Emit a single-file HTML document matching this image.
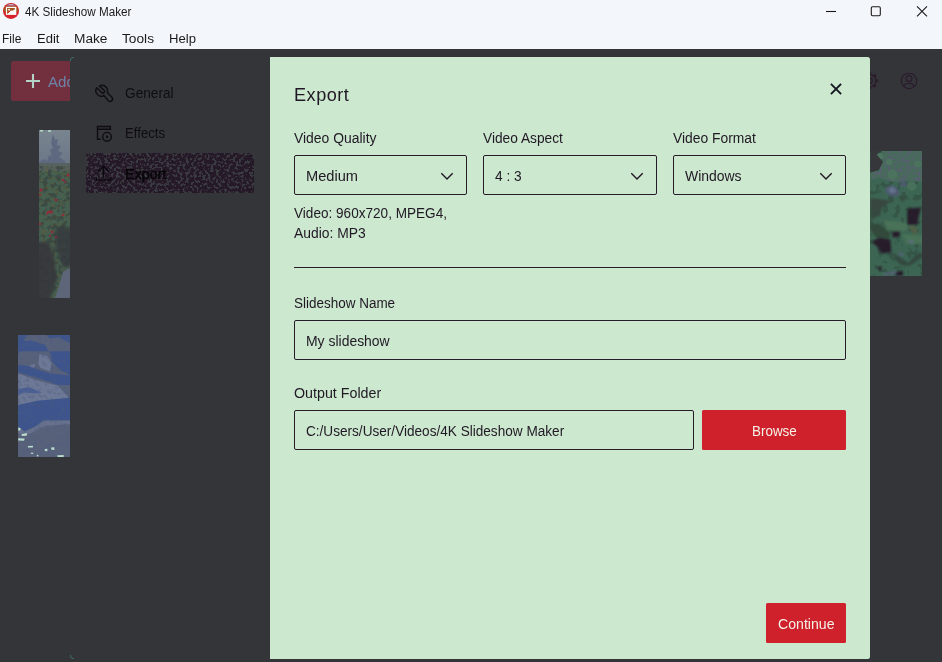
<!DOCTYPE html>
<html>
<head>
<meta charset="utf-8">
<title>4K Slideshow Maker</title>
<style>
html,body{margin:0;padding:0;}
body{width:942px;height:662px;overflow:hidden;position:relative;background:#343539;font-family:"Liberation Sans",sans-serif;color:#1b1b22;}
.abs{position:absolute;white-space:nowrap;}
#topbar{left:0;top:0;width:942px;height:49px;background:#f3f6fa;}
.t{position:absolute;white-space:nowrap;line-height:1;transform-origin:0 0;}
#title{left:25px;top:5px;font-size:13px;color:#1a1a1a;}
.menu{font-size:13px;color:#1a1a1a;top:32px;}
#addbtn{left:11px;top:61px;width:70px;height:40px;background:#72303f;border-radius:2px 0 0 2px;}
#side{left:70px;top:57px;width:200px;height:602px;background:#343539;border-radius:3px 0 0 3px;}
.nav{font-size:14px;color:#1c1b20;}
#dlg{left:270px;top:57px;width:600px;height:602px;background:#cce8cf;border-radius:0 2.500px 2.500px 0;}
.lbl{font-size:14px;color:#1b1b22;}
.box{position:absolute;box-sizing:border-box;border:1px solid #271b29;border-radius:2px;height:40px;}
.btn{position:absolute;background:#cf212b;border-radius:1.500px;height:40px;color:#f6efe6;font-size:14px;text-align:center;line-height:40px;}
</style>
</head>
<body>
<div id="topbar" class="abs"></div>
<!-- app icon -->
<svg class="abs" style="left:0;top:0" width="24" height="22" viewBox="0 0 24 22">
  <circle cx="11" cy="10.900" r="8" fill="#d6212b"/>
  <path d="M3.600 11.400a7.400 7.400 0 0 1 14.800 0z" fill="#a3561f"/>
  <rect x="7.400" y="4.100" width="7.200" height="1.700" fill="#b5629c"/>
  <rect x="9" y="4.200" width="4" height="0.600" fill="#dcdcc4"/>
  <rect x="5.900" y="6.800" width="10.400" height="8.100" fill="#fbfbfb"/>
  <path d="M7.100 8.100h7.700v1.500l-1.800 1-2.500 0.200-2.900 3-0.500-0.300z" fill="#a3561f"/>
  <rect x="8.200" y="8.900" width="1.700" height="1.600" fill="#fbfbfb"/>
  <path d="M7.500 13.200l2.600-2.300" stroke="#e02626" stroke-width="0.900"/>
</svg>
<!-- window controls -->
<svg class="abs" style="left:820px;top:0" width="122" height="24" viewBox="0 0 122 24">
  <path d="M6 11.5h10" stroke="#1a1a1a" stroke-width="1.1" fill="none"/>
  <rect x="51.3" y="6.8" width="9" height="9" rx="1.2" stroke="#1a1a1a" stroke-width="1.1" fill="none"/>
  <path d="M97 6.3l10 10M107 6.3l-10 10" stroke="#1a1a1a" stroke-width="1.1" fill="none"/>
</svg>

<!-- background app -->
<div id="addbtn" class="abs"></div>
<svg class="abs" style="left:24px;top:72px" width="18" height="18" viewBox="0 0 18 18"><path d="M9 2v14M2 9h14" stroke="#b6d3c8" stroke-width="2.100" fill="none"/></svg>
<div class="t" id="addtxt" style="left:47.500px;top:75px;font-size:14px;color:#6c84aa;transform:scaleX(1.080);">Add</div>

<svg id="thumb1" class="abs" style="left:39px;top:130px" width="31" height="168" viewBox="0 0 31 168">
  <defs>
    <linearGradient id="g1" x1="0" y1="0" x2="0" y2="1"><stop offset="0" stop-color="#78858f"/><stop offset="1" stop-color="#6a7486"/></linearGradient>
    <filter id="f1" x="0" y="0" width="100%" height="100%" color-interpolation-filters="sRGB">
      <feTurbulence type="fractalNoise" baseFrequency="0.22" numOctaves="2" seed="3"/>
      <feColorMatrix type="matrix" values="0 0 0 0 0.20  0 0 0 0 0.23  0 0 0 0 0.23  0 7 0 0 -3.400"/>
    </filter>
    <filter id="bl1" x="-20%" y="-20%" width="140%" height="140%"><feGaussianBlur stdDeviation="1.600"/></filter>
    <filter id="f1b" x="0" y="0" width="100%" height="100%" color-interpolation-filters="sRGB">
      <feTurbulence type="fractalNoise" baseFrequency="0.3" numOctaves="2" seed="11"/>
      <feColorMatrix type="matrix" values="0 0 0 0 0.36  0 0 0 0 0.35  0 0 0 0 0.22  7 0 0 0 -3.700"/>
    </filter>
  </defs>
  <rect width="31" height="40" fill="url(#g1)"/>
  <path d="M14 4l2 6 3-1-1 6 4 1-3 5 5 2-4 4 6 4v9H0v-8l5-3 3 2 2-6 3 1-2-6 3-2-2-5z" fill="#5e6981"/>
  <rect y="34" width="31" height="134" fill="#455f50"/><rect y="33" width="31" height="8" fill="#55625f"/>
  <rect y="36" width="31" height="132" filter="url(#f1b)" opacity="0.600"/>
  <rect y="36" width="31" height="132" filter="url(#f1)" opacity="0.550"/>
  <path d="M-3 112h13l5 14 3 24-8 22H-3z" fill="#34363a" opacity="0.850" filter="url(#bl1)"/>
  <path d="M16 100l9-4 9 4v36l-10 2-8-22z" fill="#36383c" opacity="0.800" filter="url(#bl1)"/>
  <path d="M31 138v30H16l4-12 4-14z" fill="#5d6579"/>
  <g fill="#8e2e3c"><circle cx="29" cy="45" r="1.500"/><circle cx="24" cy="50" r="1.300"/><circle cx="26" cy="52" r="1"/><circle cx="2" cy="60" r="1.700"/><circle cx="1" cy="65" r="1.100"/><circle cx="17" cy="70" r="1.300"/><ellipse cx="11" cy="82" rx="3.200" ry="1.500"/><circle cx="8" cy="84" r="1"/><circle cx="24" cy="85" r="1.300"/><circle cx="1" cy="94" r="1.200"/><circle cx="13" cy="102" r="1.500"/><circle cx="11" cy="106" r="1"/><circle cx="17" cy="107" r="1"/></g>
  <rect x="1" y="0" width="3" height="1.500" fill="#b9d7c4"/><rect x="9" y="0" width="3" height="2" fill="#a9c6bd"/>
</svg>
<svg id="thumb2" class="abs" style="left:18px;top:335px" width="52" height="122" viewBox="0 0 52 122">
  <defs>
    <filter id="f2" x="0" y="0" width="100%" height="100%" color-interpolation-filters="sRGB">
      <feTurbulence type="fractalNoise" baseFrequency="0.25" numOctaves="2" seed="5"/>
      <feColorMatrix type="matrix" values="0 0 0 0 0.30  0 0 0 0 0.36  0 0 0 0 0.50  6 0 0 0 -3.100"/>
    </filter>
    <clipPath id="c2"><rect width="52" height="122"/></clipPath>
  </defs>
  <g clip-path="url(#c2)">
  <rect width="52" height="122" fill="#57617a"/>
  <polygon points="0.2,-0.8 10.3,-0.8 2.3,9.8 0.2,12.5" fill="#3d548c"/>
  <polygon points="0.2,6.6 12.9,5.6 26.7,9.8 30.9,16.2 22.5,16.2 2.3,16.2 0.2,19.3" fill="#3d548c"/>
  <polygon points="27.7,-0.8 53.1,-0.8 53.1,8.8 41.5,2.4 32.0,3.5" fill="#3d548c"/>
  <polygon points="32.0,16.2 53.1,16.2 53.1,40.5 42.6,35.2 34.1,26.7" fill="#3d548c"/>
  <polygon points="21.4,19.3 28.8,20.4 33.6,27.8 32.0,36.3 22.5,33.1 20.3,28.9" fill="#6d7896"/>
  <polygon points="11.9,29.9 17.2,28.9 16.1,33.1 12.9,33.6" fill="#6d7896"/>
  <polygon points="0.2,29.9 9.8,31.0 32.0,38.4 53.1,40.5 53.1,50.0 40.4,50.0 22.5,43.7 0.2,37.3" fill="#3d548c"/>
  <polygon points="0.2,38.4 17.2,44.7 40.4,51.1 48.9,60.6 53.1,67.0 53.1,71.2 0.2,71.2" fill="#6d7896"/>
  <polygon points="0.2,54.3 10.8,52.1 23.5,57.4 17.2,58.5 5.5,57.4 0.2,60.6" fill="#4c5f92"/>
  <polygon points="0.2,70.1 19.3,65.8 53.1,62.6 53.1,85.4 25.6,85.4 17.2,91.7 6.6,96.5 0.2,91.7" fill="#3d548c"/>
  <polygon points="0.2,91.7 6.6,96.5 17.2,91.7 25.6,85.4 53.1,85.4 53.1,89.1 27.7,90.7 17.2,96.0 7.6,100.7 0.2,98.1" fill="#67718d"/>
  <rect width="52" height="122" filter="url(#f2)" opacity="0.350"/>
  <g fill="#b9dccd">
    <polygon points="0.2,92.8 2.6,93.0 2.3,95.4 0.2,95.4"/>
    <polygon points="3.4,99.2 8.9,98.1 8.7,100.7 3.9,101.1"/>
    <polygon points="0.2,103.2 6.6,103.4 6.1,105.7 0.2,105.5"/>
    <polygon points="9.8,111.0 15.0,110.8 14.8,112.5 10.0,112.6"/>
    <polygon points="26.7,114.0 29.3,113.8 29.4,116.3 26.9,116.1"/>
    <polygon points="33.0,112.4 36.2,112.2 36.4,115.0 33.6,114.8"/>
    <polygon points="12.9,117.7 15.3,117.7 15.3,118.9 12.9,118.9"/>
    <polygon points="39.4,120.3 45.7,120.1 45.7,122.0 39.6,122.0"/>
    <polygon points="18.8,119.8 20.4,119.8 20.4,121.4 18.8,121.4"/>
  </g>
  </g>
</svg>
<svg id="thumb3" class="abs" style="left:870px;top:151px" width="52" height="125" viewBox="0 0 52 125">
  <defs>
    <filter id="f3" x="0" y="0" width="100%" height="100%" color-interpolation-filters="sRGB">
      <feTurbulence type="fractalNoise" baseFrequency="0.16" numOctaves="2" seed="9"/>
      <feColorMatrix type="matrix" values="0 0 0 0 0.20  0 0 0 0 0.31  0 0 0 0 0.26  8 0 0 0 -4.300"/>
    </filter>
    <filter id="f3b" x="0" y="0" width="100%" height="100%" color-interpolation-filters="sRGB">
      <feTurbulence type="fractalNoise" baseFrequency="0.33" numOctaves="2" seed="2"/>
      <feColorMatrix type="matrix" values="0 0 0 0 0.34  0 0 0 0 0.37  0 0 0 0 0.44  0 10 0 0 -5.150"/>
    </filter>
    <filter id="bl3" x="-30%" y="-30%" width="160%" height="160%"><feGaussianBlur stdDeviation="0.800"/></filter>
    <clipPath id="c3"><rect width="52" height="125"/></clipPath>
    <clipPath id="c3b"><polygon points="11.9,0.1 53.1,0.1 53.1,31.0 38.3,29.9 22.5,31.0 8.7,26.7 0.2,28.9 0.2,21.5 8.7,19.3 12.9,10.9"/></clipPath>
  </defs>
  <g clip-path="url(#c3)">
  <rect width="52" height="125" fill="#3c6653"/>
  <rect width="52" height="125" filter="url(#f3)" opacity="0.700"/>
  <g clip-path="url(#c3b)"><rect width="52" height="40" fill="#476a5b"/><rect width="52" height="40" filter="url(#f3b)"/></g>
  <circle cx="10.3" cy="5.1" r="3.2" fill="#4e7560" opacity="1"/><circle cx="19.3" cy="10.9" r="3.2" fill="#4e7560" opacity="1"/><circle cx="22.5" cy="23.6" r="5.1" fill="#4c735e" opacity="1"/><circle cx="47.9" cy="13.0" r="3.6" fill="#4c735e" opacity="1"/><circle cx="41.5" cy="35.2" r="4.7" fill="#48705b" opacity="1"/>
  <polygon points="0.2,-0.8 12.9,-0.8 6.6,3.5 12.9,10.9 8.7,19.3 0.2,21.5" fill="#35373b"/>
  <g filter="url(#bl3)">
  <polygon points="15.0,37.3 21.4,34.2 27.7,37.3 29.9,43.7 22.5,45.8 16.1,42.6" fill="#4f5a72"/>
  <polygon points="18.8,37.9 22.5,35.7 26.2,39.4 24.6,42.1 19.8,41.6" fill="#65748f"/>
  <polygon points="29.9,31.0 37.3,31.0 36.2,35.2 30.9,35.7" fill="#4f5a72"/>
  <polygon points="0.2,46.9 9.8,47.9 21.4,50.0 11.9,56.4 9.8,65.1 0.2,65.1" fill="#39463f"/>
  <polygon points="28.8,45.8 36.2,46.9 32.0,51.1" fill="#35483c"/>
  <polygon points="0.2,59.0 8.7,59.0 7.6,65.3 0.2,69.6" fill="#36483f"/>
  <polygon points="11.9,68.5 36.2,71.7 38.3,80.2 17.2,79.1" fill="#4a7259"/>
  <polygon points="32.0,83.3 53.1,84.4 53.1,92.9 36.2,92.9" fill="#4a7259"/>
  <polygon points="0.2,72.8 9.8,72.8 20.3,82.3 19.3,87.6 5.5,85.5 0.2,78.0" fill="#33493b"/>
  <polygon points="21.4,105.6 27.7,104.5 38.3,111.9 45.7,103.4 52.1,101.3 52.1,106.6 39.4,115.1 30.9,114.0" fill="#34493f"/>
  <polygon points="37.3,57.9 48.9,57.9 47.9,73.8 37.3,73.8" fill="#271d2c"/>
  <polygon points="38.3,57.4 51.0,56.4 48.9,65.1 37.3,65.1" fill="#271d2c"/>
  <polygon points="1.3,90.7 9.8,86.5 20.3,88.6 21.4,101.3 11.9,102.4 6.6,95.0" fill="#261c2b"/>
  <polygon points="22.5,80.2 29.9,80.2 29.9,85.5 22.5,86.5" fill="#261c2b"/>
  <polygon points="26.7,120.4 33.0,119.8 33.0,124.8 24.6,124.8" fill="#261c2b"/>
  <polygon points="6.6,116.1 11.9,115.6 10.8,120.4" fill="#261c2b"/>
  <polygon points="12.9,122.5 26.7,119.8 25.6,122.5 14.0,124.8" fill="#56627a"/>
  <polygon points="38.3,89.2 43.6,90.2 42.6,92.9 38.9,91.3" fill="#5e6a84"/>
  <polygon points="27.7,100.3 34.1,103.4 33.0,105.6 28.8,103.4" fill="#56627a"/>
  <polygon points="38.3,74.9 45.7,74.9 48.9,82.3 42.6,83.3" fill="#5c5c3c" opacity="0.600"/>
  </g>
  </g>
</svg>

<!-- user icon -->
<svg class="abs" style="left:899px;top:71px" width="20" height="20" viewBox="0 0 20 20" fill="none" stroke="#2a1a2c" stroke-width="1.100">
  <circle cx="10" cy="9.900" r="7.700"/><circle cx="10" cy="7.600" r="3"/><path d="M4.600 15.300c1.300-2.100 3-3 5.400-3s4.100 0.900 5.400 3"/>
</svg>
<svg class="abs" style="left:859px;top:70px" width="22" height="22" viewBox="0 0 22 22" fill="none" stroke="#2a1a2c">
  <circle cx="10.500" cy="10.700" r="6.300" stroke-width="1.200"/><circle cx="10.500" cy="10.700" r="7.600" stroke-width="1.800" stroke-dasharray="2.980 2.980" stroke-dashoffset="1.500"/><circle cx="10.500" cy="10.700" r="2.800" stroke-width="1.200"/>
</svg>

<!-- sidebar -->
<div id="side" class="abs"></div>
<svg id="sel" class="abs" style="left:86px;top:153px" width="168" height="40" viewBox="0 0 168 40">
  <defs><filter id="dz" x="0" y="0" width="100%" height="100%" color-interpolation-filters="sRGB">
    <feTurbulence type="fractalNoise" baseFrequency="0.36" numOctaves="2" seed="7" result="n"/>
    <feColorMatrix in="n" type="matrix" values="0 0 0 0 0.227  0 0 0 0 0.231  0 0 0 0 0.251  12 0 0 0 -6.200"/>
  </filter></defs>
  <rect width="168" height="40" rx="2" fill="#251827"/>
  <rect width="168" height="40" rx="2" filter="url(#dz)"/>
</svg>
<svg class="abs" style="left:69px;top:56px" width="6" height="6" viewBox="0 0 6 6"><path d="M1.500 5V4A2.500 2.500 0 0 1 4 1.500H5" stroke="#3f6e66" stroke-width="1" fill="none"/></svg>
<svg class="abs" style="left:69px;top:654px" width="6" height="6" viewBox="0 0 6 6"><path d="M1.500 1V2A2.500 2.500 0 0 0 4 4.500H5" stroke="#3f6e66" stroke-width="1" fill="none"/></svg>
<!-- nav icons -->
<svg class="abs" style="left:92px;top:81px" width="24" height="24" viewBox="0 0 24 24" fill="none" stroke="#0f0d12" stroke-width="1.500" stroke-linejoin="round">
  <path transform="translate(12.300 12.200) scale(0.940) translate(-12 -12)" d="M6.800 4.400A5.850 5.850 0 0 1 15.200 11.200L20.500 16.900A2.650 2.650 0 0 1 16.300 20L11.600 14.500A5.850 5.850 0 0 1 4 6.100L9.100 11.200A1.800 1.800 0 0 0 11.850 8.800Z"/>
</svg>
<svg class="abs" style="left:92px;top:121px" width="24" height="24" viewBox="0 0 24 24" fill="none" stroke="#0f0d12" stroke-width="1.400">
  <path d="M8.700 18.300H5.500V5.450H18.400V8.200H5.500"/><circle cx="15" cy="15.800" r="4.400"/><path d="M14 13.900v3.800l2.800-1.900z" fill="#0f0d12" stroke="none"/>
</svg>
<svg class="abs" style="left:92px;top:161px" width="24" height="24" viewBox="0 0 24 24" fill="none" stroke="#0c0a0f" stroke-width="1.300">
  <path d="M4.450 16.200v3h14.150v-3M11.400 16.400V5.200M6.350 10.500L11.400 5.200l5.300 5.300"/>
</svg>

<!-- dialog -->
<div id="dlg" class="abs"></div>
<svg class="abs" style="left:829px;top:82px" width="14" height="14" viewBox="0 0 14 14"><path d="M2.600 2.600l8.800 8.800M11.400 2.600l-8.800 8.800" stroke="#15151f" stroke-width="1.900" stroke-linecap="square" fill="none"/></svg>


<div class="box" style="left:294px;top:155px;width:173px;"></div>
<div class="box" style="left:483px;top:155px;width:174px;"></div>
<div class="box" style="left:673px;top:155px;width:173px;"></div>
<svg class="abs" style="left:439px;top:171px" width="16" height="10" viewBox="0 0 16 10"><path d="M2.300 2.300l5.700 5.700 5.700-5.700" stroke="#201824" stroke-width="1.400" fill="none"/></svg>
<svg class="abs" style="left:629px;top:171px" width="16" height="10" viewBox="0 0 16 10"><path d="M2.300 2.300l5.700 5.700 5.700-5.700" stroke="#201824" stroke-width="1.400" fill="none"/></svg>
<svg class="abs" style="left:818px;top:171px" width="16" height="10" viewBox="0 0 16 10"><path d="M2.300 2.300l5.700 5.700 5.700-5.700" stroke="#201824" stroke-width="1.400" fill="none"/></svg>

<div class="abs" style="left:294px;top:267px;width:552px;height:1px;background:#271b29;"></div>

<div class="box" style="left:294px;top:320px;width:552px;"></div>

<div class="box" style="left:294px;top:410px;width:400px;"></div>
<div class="btn" style="left:702px;top:410px;width:144px;"></div>
<div class="btn" style="left:766px;top:603px;width:80px;"></div>
<div class="t" id="title" style="left:24.85px;top:6.42px;font-size:12.5px;color:#1a1a1a;transform:scaleX(0.9346);">4K Slideshow Maker</div>
<div class="t" id="m1" style="left:1.79px;top:33.42px;font-size:12.5px;color:#1a1a1a;transform:scaleX(0.9580);">File</div>
<div class="t" id="m2" style="left:36.79px;top:33.42px;font-size:12.5px;color:#1a1a1a;transform:scaleX(1.0413);">Edit</div>
<div class="t" id="m3" style="left:73.63px;top:33.42px;font-size:12.5px;color:#1a1a1a;transform:scaleX(1.0954);">Make</div>
<div class="t" id="m4" style="left:122.47px;top:33.42px;font-size:12.5px;color:#1a1a1a;transform:scaleX(1.0970);">Tools</div>
<div class="t" id="m5" style="left:168.90px;top:33.42px;font-size:12.5px;color:#1a1a1a;transform:scaleX(1.0471);">Help</div>
<div class="t" id="n1" style="left:125.27px;top:86.15px;font-size:14px;color:#0f0d12;transform:scaleX(0.9768);">General</div>
<div class="t" id="n2" style="left:125.20px;top:126.15px;font-size:14px;color:#0f0d12;transform:scaleX(0.9426);">Effects</div>
<div class="t" id="n3" style="left:125.16px;top:167.15px;font-size:14px;color:#09070b;-webkit-text-stroke:0.55px #09070b;transform:scaleX(1.0263);">Export</div>
<div class="t" id="h1" style="left:294.13px;top:85.76px;font-size:18px;color:#201824;letter-spacing:0.5px;transform:scaleX(1.0056);">Export</div>
<div class="t" id="l1" style="left:294.16px;top:131.15px;font-size:14px;color:#201824;transform:scaleX(0.9936);">Video Quality</div>
<div class="t" id="l2" style="left:483.08px;top:131.15px;font-size:14px;color:#201824;transform:scaleX(0.9800);">Video Aspect</div>
<div class="t" id="l3" style="left:673.40px;top:131.15px;font-size:14px;color:#201824;transform:scaleX(0.9898);">Video Format</div>
<div class="t" id="v1" style="left:305.64px;top:169.15px;font-size:14px;color:#201824;transform:scaleX(1.0449);">Medium</div>
<div class="t" id="v2" style="left:494.75px;top:169.15px;font-size:14px;color:#201824;transform:scaleX(0.9804);">4 : 3</div>
<div class="t" id="v3" style="left:685.04px;top:169.15px;font-size:14px;color:#201824;transform:scaleX(0.9966);">Windows</div>
<div class="t" id="d1" style="left:294.08px;top:206.15px;font-size:14px;color:#201824;transform:scaleX(0.9699);">Video: 960x720, MPEG4,</div>
<div class="t" id="d2" style="left:294.41px;top:226.15px;font-size:14px;color:#201824;transform:scaleX(0.9909);">Audio: MP3</div>
<div class="t" id="l4" style="left:293.78px;top:296.15px;font-size:14px;color:#201824;transform:scaleX(0.9625);">Slideshow Name</div>
<div class="t" id="v4" style="left:305.86px;top:334.15px;font-size:14px;color:#201824;transform:scaleX(0.9959);">My slideshow</div>
<div class="t" id="l5" style="left:293.92px;top:386.15px;font-size:14px;color:#201824;transform:scaleX(1.0184);">Output Folder</div>
<div class="t" id="v5" style="left:306.20px;top:424.15px;font-size:14px;color:#201824;transform:scaleX(0.9711);">C:/Users/User/Videos/4K Slideshow Maker</div>
<div class="t" id="b1" style="left:752.09px;top:424.15px;font-size:14px;color:#f4f1e8;transform:scaleX(0.9587);">Browse</div>
<div class="t" id="b2" style="left:778.03px;top:617.15px;font-size:14px;color:#f4f1e8;transform:scaleX(1.0084);">Continue</div>
</body>
</html>
